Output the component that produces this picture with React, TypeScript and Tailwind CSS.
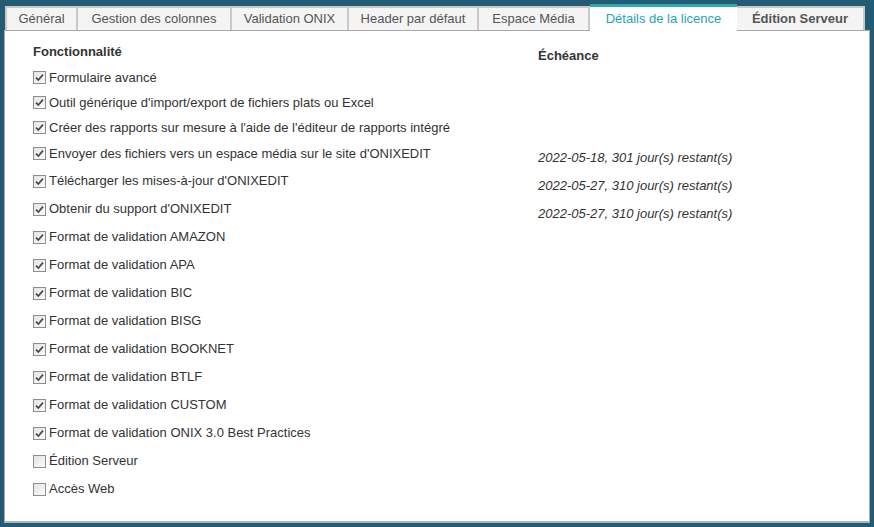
const tabs = [
  { label: "Général", w: "w-[73px] border-l-2" },
  { label: "Gestion des colonnes", w: "w-[154px]" },
  { label: "Validation ONIX", w: "w-[117px]" },
  { label: "Header par défaut", w: "w-[130px]" },
  { label: "Espace Média", w: "w-[111px]" },
  { label: "Détails de la licence", w: "w-[147px]", active: true },
  { label: "Édition Serveur", w: "w-[128px]", bold: true },
];

const features: { label: string; checked: boolean }[] = [
  { label: "Formulaire avancé", checked: true },
  { label: "Outil générique d'import/export de fichiers plats ou Excel", checked: true },
  { label: "Créer des rapports sur mesure à l'aide de l'éditeur de rapports intégré", checked: true },
  { label: "Envoyer des fichiers vers un espace média sur le site d'ONIXEDIT", checked: true },
  { label: "Télécharger les mises-à-jour d'ONIXEDIT", checked: true },
  { label: "Obtenir du support d'ONIXEDIT", checked: true },
  { label: "Format de validation AMAZON", checked: true },
  { label: "Format de validation APA", checked: true },
  { label: "Format de validation BIC", checked: true },
  { label: "Format de validation BISG", checked: true },
  { label: "Format de validation BOOKNET", checked: true },
  { label: "Format de validation BTLF", checked: true },
  { label: "Format de validation CUSTOM", checked: true },
  { label: "Format de validation ONIX 3.0 Best Practices", checked: true },
  { label: "Édition Serveur", checked: false },
  { label: "Accès Web", checked: false },
];

const dates = [
  "2022-05-18, 301 jour(s) restant(s)",
  "2022-05-27, 310 jour(s) restant(s)",
  "2022-05-27, 310 jour(s) restant(s)",
];

function Checkbox({ checked }: { checked: boolean }) {
  return (
    <span className="w-[13px] h-[13px] shrink-0 border border-[#8e8e8e] bg-gradient-to-br from-[#e4e4e4] to-[#fbfbfb] flex items-center justify-center">
      {checked && (
        <svg width="11" height="11" viewBox="0 0 11 11">
          <path d="M2 5.6 L4.3 8 L9 2.6" fill="none" stroke="#4a4a4a" strokeWidth="1.7" />
        </svg>
      )}
    </span>
  );
}

export default function App() {
  return (
    <div
      className="w-[874px] h-[527px] bg-[#215c74] pl-[4px] pt-[4px] overflow-hidden"
      style={{ fontFamily: '"Liberation Sans", Arial, sans-serif' }}
    >
      <div className="w-[866px]">
        {/* Tabs */}
        <div className="flex items-end h-[26px] pl-[1px]">
          {tabs.map((t) =>
            t.active ? (
              <div
                key={t.label}
                className={`${t.w} h-[27px] -mb-[1px] bg-white border-t-[3px] border-[#2aa8b8] flex items-center justify-center text-[13px] text-[#2aa2b4] relative z-10`}
              >
                {t.label}
              </div>
            ) : (
              <div
                key={t.label}
                className={`${t.w} h-[24px] bg-[#f4f4f4] border-t-2 border-r-2 border-[#c9c9c9] flex items-center justify-center text-[13px] text-[#555] ${t.bold ? "font-bold" : ""}`}
              >
                {t.label}
              </div>
            )
          )}
        </div>

        {/* Content */}
        <div className="h-[493px] bg-white border border-[#a9a9a9] border-b-2 border-b-[#b5b5b5] flex text-[13px] text-[#333]">
          <div className="w-[504px] pl-[28px] pt-[13px]">
            <div className="font-bold h-[16px] leading-[16px] mb-[5px]">Fonctionnalité</div>
            {features.map((f, i) => (
              <div
                key={f.label}
                className={`flex items-center gap-[3px] ${i < 3 ? "h-[25px]" : i === 3 ? "h-[27px]" : "h-[28px]"}`}
              >
                <Checkbox checked={f.checked} />
                <span className="whitespace-nowrap">{f.label}</span>
              </div>
            ))}
          </div>
          <div className="pl-[29px] pt-[17px]">
            <div className="font-bold h-[16px] leading-[16px]">Échéance</div>
            <div className="h-[80px]" />
            {dates.map((d, i) => (
              <div key={i} className="h-[28px] flex items-center italic whitespace-nowrap">
                {d}
              </div>
            ))}
          </div>
        </div>
      </div>
    </div>
  );
}
